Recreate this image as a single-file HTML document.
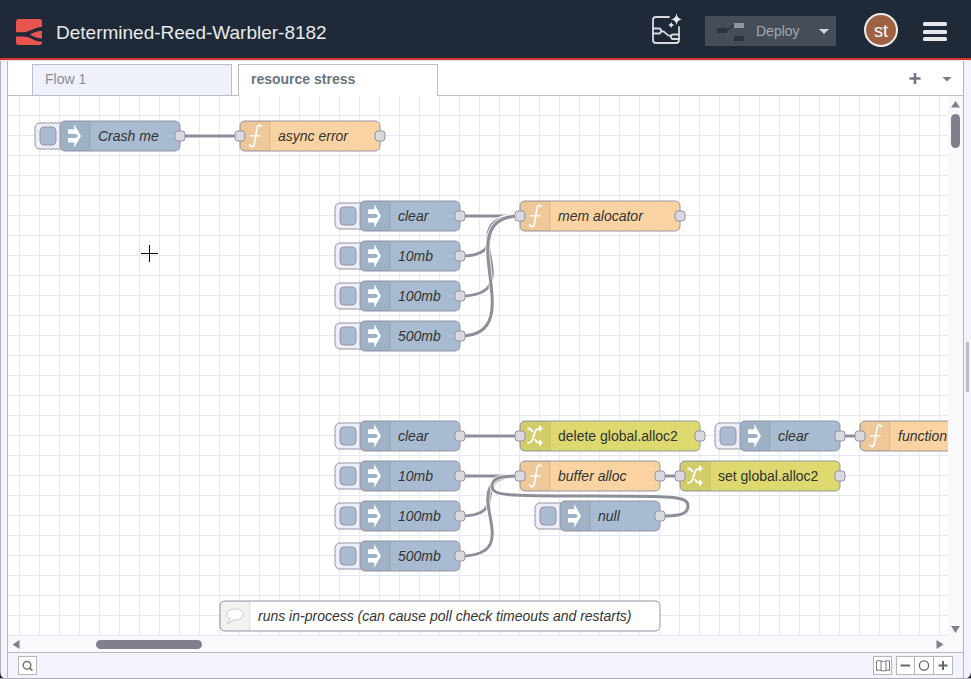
<!DOCTYPE html>
<html><head><meta charset="utf-8"><style>
html,body{margin:0;padding:0;width:971px;height:679px;overflow:hidden;background:#f3f3fb;font-family:"Liberation Sans",sans-serif;}
#hdr{position:absolute;left:0;top:0;width:971px;height:58px;background:#1f2937;}
#red{position:absolute;left:0;top:58px;width:971px;height:2px;background:#d83430;}
svg text{font-family:"Liberation Sans",sans-serif;font-size:14px;fill:#333;}
.lo{fill:none;stroke:#fff;stroke-opacity:0.8;stroke-width:5;}
.ln{fill:none;stroke:#8e8e9a;stroke-width:3;}
</style></head><body>
<div id="hdr"></div><div id="red"></div>
<svg width="971" height="679" style="position:absolute;left:0;top:0">
<!-- logo -->
<rect x="16" y="19" width="26" height="26" rx="2.5" fill="#e9544f"/>
<path d="M16 32.2 L23.3 32.2 C30 32.2 34 27.3 42 27.1 L42 30.9 C36 31 33 32.8 29.9 34.5 C33 36.2 36 38.3 42 38.5 L42 41.8 C34 41.6 30 36.5 23.3 36.5 L16 36.5 Z" fill="#1f2937"/>
<text x="56" y="39" style="font-size:19px;fill:#e8eaee">Determined-Reed-Warbler-8182</text>
<!-- ai icon -->
<g stroke="#d8dadf" stroke-width="1.8" fill="none" stroke-linecap="round">
<path d="M669 17 H656 Q653 17 653 20 V40 Q653 43 656 43 H676 Q679 43 679 40 V27"/>
<path d="M653 28.5 H659 Q661 28.5 661 31 Q661 33.5 659 33.5 H653"/>
<path d="M661 31 Q664 31 666 33.5 Q668 36 671 36"/>
<path d="M679 34.5 H673 Q671 34.5 671 36.5 Q671 39 673 39 H679"/>
</g>
<path d="M676.5 13.5 Q677.3 18.5 682 19.3 Q677.3 20.1 676.5 25 Q675.7 20.1 671 19.3 Q675.7 18.5 676.5 13.5Z" fill="#e5e7eb"/>
<path d="M671.2 22 Q671.7 24.5 674.2 25 Q671.7 25.5 671.2 28 Q670.7 25.5 668.2 25 Q670.7 24.5 671.2 22Z" fill="#e5e7eb"/>
<!-- deploy -->
<rect x="705" y="16" width="131" height="30" fill="#454d59"/>
<rect x="717" y="28" width="10" height="5" fill="#2e343d"/>
<path d="M727 30.5 L734 25" stroke="#2a303a" stroke-width="1.5"/>
<rect x="734" y="23" width="10" height="5" fill="#90959d"/>
<rect x="734" y="36" width="10" height="5" fill="#2e343d"/>
<text x="756" y="36" style="font-size:14px;fill:#a3a8b0">Deploy</text>
<path d="M819 29 L829 29 L824 34 Z" fill="#d1d5db"/>
<!-- avatar -->
<circle cx="881" cy="30" r="16" fill="#9e6242" stroke="#eeeeee" stroke-width="2"/>
<text x="881" y="36.5" text-anchor="middle" style="font-size:18px;fill:#fff">st</text>
<!-- hamburger -->
<rect x="923" y="22" width="24" height="4" rx="1.5" fill="#e5e7eb"/>
<rect x="923" y="30" width="24" height="4" rx="1.5" fill="#e5e7eb"/>
<rect x="923" y="37" width="24" height="4" rx="1.5" fill="#e5e7eb"/>

<!-- frame -->
<rect x="0" y="60" width="1" height="619" fill="#aeaeba"/>
<rect x="7" y="60" width="1" height="619" fill="#b5b6c4"/>
<rect x="963" y="60" width="1" height="619" fill="#b5b6c4"/>
<rect x="8" y="60" width="955" height="35" fill="#ffffff"/>
<rect x="0" y="60" width="971" height="1" fill="#e2e7eb"/>
<rect x="8" y="95" width="955" height="1" fill="#bbbccb"/>
<!-- tabs -->
<rect x="32.5" y="64.5" width="199" height="31" fill="#eef0fa" stroke="#bbbccb"/>
<text x="45" y="84" style="fill:#8a8d96">Flow 1</text>
<rect x="238.5" y="64.5" width="199" height="32" fill="#ffffff" stroke="#bbbccb"/>
<rect x="239" y="95" width="198" height="2" fill="#ffffff"/>
<text x="251" y="84" style="font-weight:bold;fill:#687580">resource stress</text>
<path d="M915 73 V84 M909.5 78.5 H920.5" stroke="#757888" stroke-width="2.6"/>
<path d="M942.5 77 L951.5 77 L947 81.5Z" fill="#757888"/>
<!-- workspace -->
<rect x="8" y="96" width="940" height="540" fill="#ffffff"/>
<defs><clipPath id="ws"><rect x="8" y="96" width="940" height="540"/></clipPath></defs>
<g clip-path="url(#ws)">
<rect x="19" y="96" width="1" height="540" fill="#e6e6f6"/><rect x="39" y="96" width="1" height="540" fill="#e6e6f6"/><rect x="59" y="96" width="1" height="540" fill="#e6e6f6"/><rect x="79" y="96" width="1" height="540" fill="#e6e6f6"/><rect x="99" y="96" width="1" height="540" fill="#e6e6f6"/><rect x="119" y="96" width="1" height="540" fill="#e6e6f6"/><rect x="139" y="96" width="1" height="540" fill="#e6e6f6"/><rect x="159" y="96" width="1" height="540" fill="#e6e6f6"/><rect x="179" y="96" width="1" height="540" fill="#e6e6f6"/><rect x="199" y="96" width="1" height="540" fill="#e6e6f6"/><rect x="219" y="96" width="1" height="540" fill="#e6e6f6"/><rect x="239" y="96" width="1" height="540" fill="#e6e6f6"/><rect x="259" y="96" width="1" height="540" fill="#e6e6f6"/><rect x="279" y="96" width="1" height="540" fill="#e6e6f6"/><rect x="299" y="96" width="1" height="540" fill="#e6e6f6"/><rect x="319" y="96" width="1" height="540" fill="#e6e6f6"/><rect x="339" y="96" width="1" height="540" fill="#e6e6f6"/><rect x="359" y="96" width="1" height="540" fill="#e6e6f6"/><rect x="379" y="96" width="1" height="540" fill="#e6e6f6"/><rect x="399" y="96" width="1" height="540" fill="#e6e6f6"/><rect x="419" y="96" width="1" height="540" fill="#e6e6f6"/><rect x="439" y="96" width="1" height="540" fill="#e6e6f6"/><rect x="459" y="96" width="1" height="540" fill="#e6e6f6"/><rect x="479" y="96" width="1" height="540" fill="#e6e6f6"/><rect x="499" y="96" width="1" height="540" fill="#e6e6f6"/><rect x="519" y="96" width="1" height="540" fill="#e6e6f6"/><rect x="539" y="96" width="1" height="540" fill="#e6e6f6"/><rect x="559" y="96" width="1" height="540" fill="#e6e6f6"/><rect x="579" y="96" width="1" height="540" fill="#e6e6f6"/><rect x="599" y="96" width="1" height="540" fill="#e6e6f6"/><rect x="619" y="96" width="1" height="540" fill="#e6e6f6"/><rect x="639" y="96" width="1" height="540" fill="#e6e6f6"/><rect x="659" y="96" width="1" height="540" fill="#e6e6f6"/><rect x="679" y="96" width="1" height="540" fill="#e6e6f6"/><rect x="699" y="96" width="1" height="540" fill="#e6e6f6"/><rect x="719" y="96" width="1" height="540" fill="#e6e6f6"/><rect x="739" y="96" width="1" height="540" fill="#e6e6f6"/><rect x="759" y="96" width="1" height="540" fill="#e6e6f6"/><rect x="779" y="96" width="1" height="540" fill="#e6e6f6"/><rect x="799" y="96" width="1" height="540" fill="#e6e6f6"/><rect x="819" y="96" width="1" height="540" fill="#e6e6f6"/><rect x="839" y="96" width="1" height="540" fill="#e6e6f6"/><rect x="859" y="96" width="1" height="540" fill="#e6e6f6"/><rect x="879" y="96" width="1" height="540" fill="#e6e6f6"/><rect x="899" y="96" width="1" height="540" fill="#e6e6f6"/><rect x="919" y="96" width="1" height="540" fill="#e6e6f6"/><rect x="939" y="96" width="1" height="540" fill="#e6e6f6"/><rect x="8" y="115" width="940" height="1" fill="#e6e6f6"/><rect x="8" y="135" width="940" height="1" fill="#e6e6f6"/><rect x="8" y="155" width="940" height="1" fill="#e6e6f6"/><rect x="8" y="175" width="940" height="1" fill="#e6e6f6"/><rect x="8" y="195" width="940" height="1" fill="#e6e6f6"/><rect x="8" y="215" width="940" height="1" fill="#e6e6f6"/><rect x="8" y="235" width="940" height="1" fill="#e6e6f6"/><rect x="8" y="255" width="940" height="1" fill="#e6e6f6"/><rect x="8" y="275" width="940" height="1" fill="#e6e6f6"/><rect x="8" y="295" width="940" height="1" fill="#e6e6f6"/><rect x="8" y="315" width="940" height="1" fill="#e6e6f6"/><rect x="8" y="335" width="940" height="1" fill="#e6e6f6"/><rect x="8" y="355" width="940" height="1" fill="#e6e6f6"/><rect x="8" y="375" width="940" height="1" fill="#e6e6f6"/><rect x="8" y="395" width="940" height="1" fill="#e6e6f6"/><rect x="8" y="415" width="940" height="1" fill="#e6e6f6"/><rect x="8" y="435" width="940" height="1" fill="#e6e6f6"/><rect x="8" y="455" width="940" height="1" fill="#e6e6f6"/><rect x="8" y="475" width="940" height="1" fill="#e6e6f6"/><rect x="8" y="495" width="940" height="1" fill="#e6e6f6"/><rect x="8" y="515" width="940" height="1" fill="#e6e6f6"/><rect x="8" y="535" width="940" height="1" fill="#e6e6f6"/><rect x="8" y="555" width="940" height="1" fill="#e6e6f6"/><rect x="8" y="575" width="940" height="1" fill="#e6e6f6"/><rect x="8" y="595" width="940" height="1" fill="#e6e6f6"/><rect x="8" y="615" width="940" height="1" fill="#e6e6f6"/><rect x="8" y="635" width="940" height="1" fill="#e6e6f6"/>
<path d="M 180 136 C 225.0 136 195.0 136 240 136" class="lo"/>
<path d="M 180 136 C 225.0 136 195.0 136 240 136" class="ln"/>
<path d="M 460 216 C 505.0 216 475.0 216 520 216" class="lo"/>
<path d="M 460 216 C 505.0 216 475.0 216 520 216" class="ln"/>
<path d="M 460 256 C 514.0832691319598 256 465.91673086804013 216 520 216" class="lo"/>
<path d="M 460 256 C 514.0832691319598 256 465.91673086804013 216 520 216" class="ln"/>
<path d="M 460 296 C 535.0 296 445.0 216 520 216" class="lo"/>
<path d="M 460 296 C 535.0 296 445.0 216 520 216" class="ln"/>
<path d="M 460 336 C 535.0 336 445.0 216 520 216" class="lo"/>
<path d="M 460 336 C 535.0 336 445.0 216 520 216" class="ln"/>
<path d="M 460 436 C 505.0 436 475.0 436 520 436" class="lo"/>
<path d="M 460 436 C 505.0 436 475.0 436 520 436" class="ln"/>
<path d="M 460 476 C 505.0 476 475.0 476 520 476" class="lo"/>
<path d="M 460 476 C 505.0 476 475.0 476 520 476" class="ln"/>
<path d="M 460 516 C 514.0832691319598 516 465.91673086804013 476 520 476" class="lo"/>
<path d="M 460 516 C 514.0832691319598 516 465.91673086804013 476 520 476" class="ln"/>
<path d="M 460 556 C 535.0 556 445.0 476 520 476" class="lo"/>
<path d="M 460 556 C 535.0 556 445.0 476 520 476" class="ln"/>
<path d="M 660 516 C 674.0 516 688.0 516 688.0 506.0 S 674.0 496 590 496 S 492.0 496 492.0 486.0 S 506.0 476 520 476" class="lo"/>
<path d="M 660 516 C 674.0 516 688.0 516 688.0 506.0 S 674.0 496 590 496 S 492.0 496 492.0 486.0 S 506.0 476 520 476" class="ln"/>
<path d="M 660 476 C 675.0 476 665.0 476 680 476" class="lo"/>
<path d="M 660 476 C 675.0 476 665.0 476 680 476" class="ln"/>
<path d="M 840 436 C 855.0 436 845.0 436 860 436" class="lo"/>
<path d="M 840 436 C 855.0 436 845.0 436 860 436" class="ln"/>
<g transform="translate(60,121)">
<rect x="-25" y="2" width="32" height="26" rx="5" ry="5" fill="#eeeef8" stroke="#9594a6"/>
<rect x="-20" y="6" width="16" height="18" rx="4" ry="4" fill="#a8bbd0" stroke="#9594a6"/>
<rect x="0" y="0" width="120" height="30" rx="5" ry="5" fill="#a8bbd0" stroke="#9594a6"/>
<path d="M5 0 H30 V30 H5 A5 5 0 0 1 0 25 V5 A5 5 0 0 1 5 0Z" fill="#000" fill-opacity="0.05"/>
<path d="M30 1 L30 29" stroke="#000" stroke-opacity="0.1"/>
<path d="M14.3 3.1 L20.9 15 L14.3 26.8 L14.3 21.6 L8.1 21.6 L8.1 16.9 L16 16.9 L18.2 15 L16 13 L8.1 13 L8.1 8.2 L14.3 8.2 Z" fill="#fff"/>
<text x="38" y="15" dy="0.35em" style="font-style:italic;">Crash me</text>
<rect x="115" y="10" width="10" height="10" rx="3" ry="3" fill="#d9dadf" stroke="#9594a6"/>
</g>
<g transform="translate(240,121)">
<rect x="0" y="0" width="140" height="30" rx="5" ry="5" fill="#fbd3a2" stroke="#9594a6"/>
<path d="M5 0 H30 V30 H5 A5 5 0 0 1 0 25 V5 A5 5 0 0 1 5 0Z" fill="#000" fill-opacity="0.05"/>
<path d="M30 1 L30 29" stroke="#000" stroke-opacity="0.1"/>
<path d="M21.7 6.3 C21 3.8 18.2 3.2 17.3 6.2 C16.4 9.5 15.2 19.5 14.2 23.3 C13.5 26.2 10.5 26.5 9.3 23.3" stroke="#fff" stroke-width="1.7" fill="none"/><path d="M10 14.8 H20.6" stroke="#fff" stroke-width="1.3"/>
<text x="38" y="15" dy="0.35em" style="font-style:italic;">async error</text>
<rect x="-5" y="10" width="10" height="10" rx="3" ry="3" fill="#d9dadf" stroke="#9594a6"/>
<rect x="135" y="10" width="10" height="10" rx="3" ry="3" fill="#d9dadf" stroke="#9594a6"/>
</g>
<g transform="translate(360,201)">
<rect x="-25" y="2" width="32" height="26" rx="5" ry="5" fill="#eeeef8" stroke="#9594a6"/>
<rect x="-20" y="6" width="16" height="18" rx="4" ry="4" fill="#a8bbd0" stroke="#9594a6"/>
<rect x="0" y="0" width="100" height="30" rx="5" ry="5" fill="#a8bbd0" stroke="#9594a6"/>
<path d="M5 0 H30 V30 H5 A5 5 0 0 1 0 25 V5 A5 5 0 0 1 5 0Z" fill="#000" fill-opacity="0.05"/>
<path d="M30 1 L30 29" stroke="#000" stroke-opacity="0.1"/>
<path d="M14.3 3.1 L20.9 15 L14.3 26.8 L14.3 21.6 L8.1 21.6 L8.1 16.9 L16 16.9 L18.2 15 L16 13 L8.1 13 L8.1 8.2 L14.3 8.2 Z" fill="#fff"/>
<text x="38" y="15" dy="0.35em" style="font-style:italic;">clear</text>
<rect x="95" y="10" width="10" height="10" rx="3" ry="3" fill="#d9dadf" stroke="#9594a6"/>
</g>
<g transform="translate(360,241)">
<rect x="-25" y="2" width="32" height="26" rx="5" ry="5" fill="#eeeef8" stroke="#9594a6"/>
<rect x="-20" y="6" width="16" height="18" rx="4" ry="4" fill="#a8bbd0" stroke="#9594a6"/>
<rect x="0" y="0" width="100" height="30" rx="5" ry="5" fill="#a8bbd0" stroke="#9594a6"/>
<path d="M5 0 H30 V30 H5 A5 5 0 0 1 0 25 V5 A5 5 0 0 1 5 0Z" fill="#000" fill-opacity="0.05"/>
<path d="M30 1 L30 29" stroke="#000" stroke-opacity="0.1"/>
<path d="M14.3 3.1 L20.9 15 L14.3 26.8 L14.3 21.6 L8.1 21.6 L8.1 16.9 L16 16.9 L18.2 15 L16 13 L8.1 13 L8.1 8.2 L14.3 8.2 Z" fill="#fff"/>
<text x="38" y="15" dy="0.35em" style="font-style:italic;">10mb</text>
<rect x="95" y="10" width="10" height="10" rx="3" ry="3" fill="#d9dadf" stroke="#9594a6"/>
</g>
<g transform="translate(360,281)">
<rect x="-25" y="2" width="32" height="26" rx="5" ry="5" fill="#eeeef8" stroke="#9594a6"/>
<rect x="-20" y="6" width="16" height="18" rx="4" ry="4" fill="#a8bbd0" stroke="#9594a6"/>
<rect x="0" y="0" width="100" height="30" rx="5" ry="5" fill="#a8bbd0" stroke="#9594a6"/>
<path d="M5 0 H30 V30 H5 A5 5 0 0 1 0 25 V5 A5 5 0 0 1 5 0Z" fill="#000" fill-opacity="0.05"/>
<path d="M30 1 L30 29" stroke="#000" stroke-opacity="0.1"/>
<path d="M14.3 3.1 L20.9 15 L14.3 26.8 L14.3 21.6 L8.1 21.6 L8.1 16.9 L16 16.9 L18.2 15 L16 13 L8.1 13 L8.1 8.2 L14.3 8.2 Z" fill="#fff"/>
<text x="38" y="15" dy="0.35em" style="font-style:italic;">100mb</text>
<rect x="95" y="10" width="10" height="10" rx="3" ry="3" fill="#d9dadf" stroke="#9594a6"/>
</g>
<g transform="translate(360,321)">
<rect x="-25" y="2" width="32" height="26" rx="5" ry="5" fill="#eeeef8" stroke="#9594a6"/>
<rect x="-20" y="6" width="16" height="18" rx="4" ry="4" fill="#a8bbd0" stroke="#9594a6"/>
<rect x="0" y="0" width="100" height="30" rx="5" ry="5" fill="#a8bbd0" stroke="#9594a6"/>
<path d="M5 0 H30 V30 H5 A5 5 0 0 1 0 25 V5 A5 5 0 0 1 5 0Z" fill="#000" fill-opacity="0.05"/>
<path d="M30 1 L30 29" stroke="#000" stroke-opacity="0.1"/>
<path d="M14.3 3.1 L20.9 15 L14.3 26.8 L14.3 21.6 L8.1 21.6 L8.1 16.9 L16 16.9 L18.2 15 L16 13 L8.1 13 L8.1 8.2 L14.3 8.2 Z" fill="#fff"/>
<text x="38" y="15" dy="0.35em" style="font-style:italic;">500mb</text>
<rect x="95" y="10" width="10" height="10" rx="3" ry="3" fill="#d9dadf" stroke="#9594a6"/>
</g>
<g transform="translate(520,201)">
<rect x="0" y="0" width="160" height="30" rx="5" ry="5" fill="#fbd3a2" stroke="#9594a6"/>
<path d="M5 0 H30 V30 H5 A5 5 0 0 1 0 25 V5 A5 5 0 0 1 5 0Z" fill="#000" fill-opacity="0.05"/>
<path d="M30 1 L30 29" stroke="#000" stroke-opacity="0.1"/>
<path d="M21.7 6.3 C21 3.8 18.2 3.2 17.3 6.2 C16.4 9.5 15.2 19.5 14.2 23.3 C13.5 26.2 10.5 26.5 9.3 23.3" stroke="#fff" stroke-width="1.7" fill="none"/><path d="M10 14.8 H20.6" stroke="#fff" stroke-width="1.3"/>
<text x="38" y="15" dy="0.35em" style="font-style:italic;">mem alocator</text>
<rect x="-5" y="10" width="10" height="10" rx="3" ry="3" fill="#d9dadf" stroke="#9594a6"/>
<rect x="155" y="10" width="10" height="10" rx="3" ry="3" fill="#d9dadf" stroke="#9594a6"/>
</g>
<g transform="translate(360,421)">
<rect x="-25" y="2" width="32" height="26" rx="5" ry="5" fill="#eeeef8" stroke="#9594a6"/>
<rect x="-20" y="6" width="16" height="18" rx="4" ry="4" fill="#a8bbd0" stroke="#9594a6"/>
<rect x="0" y="0" width="100" height="30" rx="5" ry="5" fill="#a8bbd0" stroke="#9594a6"/>
<path d="M5 0 H30 V30 H5 A5 5 0 0 1 0 25 V5 A5 5 0 0 1 5 0Z" fill="#000" fill-opacity="0.05"/>
<path d="M30 1 L30 29" stroke="#000" stroke-opacity="0.1"/>
<path d="M14.3 3.1 L20.9 15 L14.3 26.8 L14.3 21.6 L8.1 21.6 L8.1 16.9 L16 16.9 L18.2 15 L16 13 L8.1 13 L8.1 8.2 L14.3 8.2 Z" fill="#fff"/>
<text x="38" y="15" dy="0.35em" style="font-style:italic;">clear</text>
<rect x="95" y="10" width="10" height="10" rx="3" ry="3" fill="#d9dadf" stroke="#9594a6"/>
</g>
<g transform="translate(360,461)">
<rect x="-25" y="2" width="32" height="26" rx="5" ry="5" fill="#eeeef8" stroke="#9594a6"/>
<rect x="-20" y="6" width="16" height="18" rx="4" ry="4" fill="#a8bbd0" stroke="#9594a6"/>
<rect x="0" y="0" width="100" height="30" rx="5" ry="5" fill="#a8bbd0" stroke="#9594a6"/>
<path d="M5 0 H30 V30 H5 A5 5 0 0 1 0 25 V5 A5 5 0 0 1 5 0Z" fill="#000" fill-opacity="0.05"/>
<path d="M30 1 L30 29" stroke="#000" stroke-opacity="0.1"/>
<path d="M14.3 3.1 L20.9 15 L14.3 26.8 L14.3 21.6 L8.1 21.6 L8.1 16.9 L16 16.9 L18.2 15 L16 13 L8.1 13 L8.1 8.2 L14.3 8.2 Z" fill="#fff"/>
<text x="38" y="15" dy="0.35em" style="font-style:italic;">10mb</text>
<rect x="95" y="10" width="10" height="10" rx="3" ry="3" fill="#d9dadf" stroke="#9594a6"/>
</g>
<g transform="translate(360,501)">
<rect x="-25" y="2" width="32" height="26" rx="5" ry="5" fill="#eeeef8" stroke="#9594a6"/>
<rect x="-20" y="6" width="16" height="18" rx="4" ry="4" fill="#a8bbd0" stroke="#9594a6"/>
<rect x="0" y="0" width="100" height="30" rx="5" ry="5" fill="#a8bbd0" stroke="#9594a6"/>
<path d="M5 0 H30 V30 H5 A5 5 0 0 1 0 25 V5 A5 5 0 0 1 5 0Z" fill="#000" fill-opacity="0.05"/>
<path d="M30 1 L30 29" stroke="#000" stroke-opacity="0.1"/>
<path d="M14.3 3.1 L20.9 15 L14.3 26.8 L14.3 21.6 L8.1 21.6 L8.1 16.9 L16 16.9 L18.2 15 L16 13 L8.1 13 L8.1 8.2 L14.3 8.2 Z" fill="#fff"/>
<text x="38" y="15" dy="0.35em" style="font-style:italic;">100mb</text>
<rect x="95" y="10" width="10" height="10" rx="3" ry="3" fill="#d9dadf" stroke="#9594a6"/>
</g>
<g transform="translate(360,541)">
<rect x="-25" y="2" width="32" height="26" rx="5" ry="5" fill="#eeeef8" stroke="#9594a6"/>
<rect x="-20" y="6" width="16" height="18" rx="4" ry="4" fill="#a8bbd0" stroke="#9594a6"/>
<rect x="0" y="0" width="100" height="30" rx="5" ry="5" fill="#a8bbd0" stroke="#9594a6"/>
<path d="M5 0 H30 V30 H5 A5 5 0 0 1 0 25 V5 A5 5 0 0 1 5 0Z" fill="#000" fill-opacity="0.05"/>
<path d="M30 1 L30 29" stroke="#000" stroke-opacity="0.1"/>
<path d="M14.3 3.1 L20.9 15 L14.3 26.8 L14.3 21.6 L8.1 21.6 L8.1 16.9 L16 16.9 L18.2 15 L16 13 L8.1 13 L8.1 8.2 L14.3 8.2 Z" fill="#fff"/>
<text x="38" y="15" dy="0.35em" style="font-style:italic;">500mb</text>
<rect x="95" y="10" width="10" height="10" rx="3" ry="3" fill="#d9dadf" stroke="#9594a6"/>
</g>
<g transform="translate(520,421)">
<rect x="0" y="0" width="180" height="30" rx="5" ry="5" fill="#ddd96e" stroke="#9594a6"/>
<path d="M5 0 H30 V30 H5 A5 5 0 0 1 0 25 V5 A5 5 0 0 1 5 0Z" fill="#000" fill-opacity="0.05"/>
<path d="M30 1 L30 29" stroke="#000" stroke-opacity="0.1"/>
<g stroke="#fff" stroke-width="2" fill="none"><path d="M7.5 7.5 C10.5 7.5 11.5 8.5 12.5 11"/><path d="M14.8 18 C15.8 21 17 21.8 20 21.8"/><path d="M7.5 22 C10.5 22 11.5 21 12.5 18.5 L15 11 C16 8.5 17 7.5 20 7.5"/></g><path d="M19.2 3.8 L22.8 7.5 L19.2 11.2 Z" fill="#fff"/><path d="M19.2 18 L22.8 21.8 L19.2 25.6 Z" fill="#fff"/>
<text x="38" y="15" dy="0.35em" style="">delete global.alloc2</text>
<rect x="-5" y="10" width="10" height="10" rx="3" ry="3" fill="#d9dadf" stroke="#9594a6"/>
<rect x="175" y="10" width="10" height="10" rx="3" ry="3" fill="#d9dadf" stroke="#9594a6"/>
</g>
<g transform="translate(520,461)">
<rect x="0" y="0" width="140" height="30" rx="5" ry="5" fill="#fbd3a2" stroke="#9594a6"/>
<path d="M5 0 H30 V30 H5 A5 5 0 0 1 0 25 V5 A5 5 0 0 1 5 0Z" fill="#000" fill-opacity="0.05"/>
<path d="M30 1 L30 29" stroke="#000" stroke-opacity="0.1"/>
<path d="M21.7 6.3 C21 3.8 18.2 3.2 17.3 6.2 C16.4 9.5 15.2 19.5 14.2 23.3 C13.5 26.2 10.5 26.5 9.3 23.3" stroke="#fff" stroke-width="1.7" fill="none"/><path d="M10 14.8 H20.6" stroke="#fff" stroke-width="1.3"/>
<text x="38" y="15" dy="0.35em" style="font-style:italic;">buffer alloc</text>
<rect x="-5" y="10" width="10" height="10" rx="3" ry="3" fill="#d9dadf" stroke="#9594a6"/>
<rect x="135" y="10" width="10" height="10" rx="3" ry="3" fill="#d9dadf" stroke="#9594a6"/>
</g>
<g transform="translate(680,461)">
<rect x="0" y="0" width="160" height="30" rx="5" ry="5" fill="#ddd96e" stroke="#9594a6"/>
<path d="M5 0 H30 V30 H5 A5 5 0 0 1 0 25 V5 A5 5 0 0 1 5 0Z" fill="#000" fill-opacity="0.05"/>
<path d="M30 1 L30 29" stroke="#000" stroke-opacity="0.1"/>
<g stroke="#fff" stroke-width="2" fill="none"><path d="M7.5 7.5 C10.5 7.5 11.5 8.5 12.5 11"/><path d="M14.8 18 C15.8 21 17 21.8 20 21.8"/><path d="M7.5 22 C10.5 22 11.5 21 12.5 18.5 L15 11 C16 8.5 17 7.5 20 7.5"/></g><path d="M19.2 3.8 L22.8 7.5 L19.2 11.2 Z" fill="#fff"/><path d="M19.2 18 L22.8 21.8 L19.2 25.6 Z" fill="#fff"/>
<text x="38" y="15" dy="0.35em" style="">set global.alloc2</text>
<rect x="-5" y="10" width="10" height="10" rx="3" ry="3" fill="#d9dadf" stroke="#9594a6"/>
<rect x="155" y="10" width="10" height="10" rx="3" ry="3" fill="#d9dadf" stroke="#9594a6"/>
</g>
<g transform="translate(560,501)">
<rect x="-25" y="2" width="32" height="26" rx="5" ry="5" fill="#eeeef8" stroke="#9594a6"/>
<rect x="-20" y="6" width="16" height="18" rx="4" ry="4" fill="#a8bbd0" stroke="#9594a6"/>
<rect x="0" y="0" width="100" height="30" rx="5" ry="5" fill="#a8bbd0" stroke="#9594a6"/>
<path d="M5 0 H30 V30 H5 A5 5 0 0 1 0 25 V5 A5 5 0 0 1 5 0Z" fill="#000" fill-opacity="0.05"/>
<path d="M30 1 L30 29" stroke="#000" stroke-opacity="0.1"/>
<path d="M14.3 3.1 L20.9 15 L14.3 26.8 L14.3 21.6 L8.1 21.6 L8.1 16.9 L16 16.9 L18.2 15 L16 13 L8.1 13 L8.1 8.2 L14.3 8.2 Z" fill="#fff"/>
<text x="38" y="15" dy="0.35em" style="font-style:italic;">null</text>
<rect x="95" y="10" width="10" height="10" rx="3" ry="3" fill="#d9dadf" stroke="#9594a6"/>
</g>
<g transform="translate(740,421)">
<rect x="-25" y="2" width="32" height="26" rx="5" ry="5" fill="#eeeef8" stroke="#9594a6"/>
<rect x="-20" y="6" width="16" height="18" rx="4" ry="4" fill="#a8bbd0" stroke="#9594a6"/>
<rect x="0" y="0" width="100" height="30" rx="5" ry="5" fill="#a8bbd0" stroke="#9594a6"/>
<path d="M5 0 H30 V30 H5 A5 5 0 0 1 0 25 V5 A5 5 0 0 1 5 0Z" fill="#000" fill-opacity="0.05"/>
<path d="M30 1 L30 29" stroke="#000" stroke-opacity="0.1"/>
<path d="M14.3 3.1 L20.9 15 L14.3 26.8 L14.3 21.6 L8.1 21.6 L8.1 16.9 L16 16.9 L18.2 15 L16 13 L8.1 13 L8.1 8.2 L14.3 8.2 Z" fill="#fff"/>
<text x="38" y="15" dy="0.35em" style="font-style:italic;">clear</text>
<rect x="95" y="10" width="10" height="10" rx="3" ry="3" fill="#d9dadf" stroke="#9594a6"/>
</g>
<g transform="translate(860,421)">
<rect x="0" y="0" width="120" height="30" rx="5" ry="5" fill="#fbd3a2" stroke="#9594a6"/>
<path d="M5 0 H30 V30 H5 A5 5 0 0 1 0 25 V5 A5 5 0 0 1 5 0Z" fill="#000" fill-opacity="0.05"/>
<path d="M30 1 L30 29" stroke="#000" stroke-opacity="0.1"/>
<path d="M21.7 6.3 C21 3.8 18.2 3.2 17.3 6.2 C16.4 9.5 15.2 19.5 14.2 23.3 C13.5 26.2 10.5 26.5 9.3 23.3" stroke="#fff" stroke-width="1.7" fill="none"/><path d="M10 14.8 H20.6" stroke="#fff" stroke-width="1.3"/>
<text x="38" y="15" dy="0.35em" style="font-style:italic;">function</text>
<rect x="-5" y="10" width="10" height="10" rx="3" ry="3" fill="#d9dadf" stroke="#9594a6"/>
<rect x="115" y="10" width="10" height="10" rx="3" ry="3" fill="#d9dadf" stroke="#9594a6"/>
</g>
<g transform="translate(220,601)">
<rect x="0" y="0" width="440" height="30" rx="5" ry="5" fill="#ffffff" stroke="#9594a6"/>
<path d="M5 0 H30 V30 H5 A5 5 0 0 1 0 25 V5 A5 5 0 0 1 5 0Z" fill="#000" fill-opacity="0.05"/>
<path d="M30 1 L30 29" stroke="#000" stroke-opacity="0.1"/>
<ellipse cx="15" cy="13.5" rx="8.5" ry="5.6" fill="#fff" stroke="#ccc" stroke-width="1"/><path d="M10.5 18 L7 23 L14 19" fill="#fff" stroke="#ccc" stroke-width="1"/>
<text x="38" y="15" dy="0.35em" style="font-style:italic;">runs in-process (can cause poll check timeouts and restarts)</text>
</g>
</g>
<!-- cursor -->
<path d="M141 253.5 H158 M149.5 245 V262" stroke="#fff" stroke-width="3"/>
<path d="M141 253.5 H158 M149.5 245 V262" stroke="#000" stroke-width="1"/>
<!-- scrollbars -->
<rect x="948" y="96" width="15" height="540" fill="#f9f9fc"/>
<rect x="8" y="636" width="955" height="16" fill="#f9f9fc"/>
<path d="M951 107.5 L960 107.5 L955.5 101Z" fill="#80808c"/>
<rect x="951" y="114" width="9" height="34" rx="4.5" fill="#80808c"/>
<path d="M951 626 L960 626 L955.5 633Z" fill="#80808c"/>
<path d="M19.5 640 L19.5 649 L12.5 644.5Z" fill="#80808c"/>
<path d="M936.5 640 L936.5 649 L943.5 644.5Z" fill="#80808c"/>
<rect x="96" y="640" width="106" height="9" rx="4.5" fill="#80808c"/>
<!-- right divider -->
<rect x="966" y="342" width="3" height="50" fill="#bbbbc4"/>
<!-- footer -->
<path d="M0 672 L0 679 L7 679 A7 7 0 0 1 0 672Z" fill="#1a1f26"/>
<path d="M971 672 L971 679 L964 679 A7 7 0 0 0 971 672Z" fill="#1a1f26"/>
<rect x="8" y="652" width="955" height="1" fill="#b5b6c4"/>
<rect x="0" y="678" width="971" height="1" fill="#aeaeba"/>
<rect x="18.5" y="656.5" width="18" height="18" fill="#fff" stroke="#b5b6c4"/>
<circle cx="27" cy="665.3" r="3.8" fill="none" stroke="#707070" stroke-width="1.4"/>
<path d="M29.8 668.1 L32.5 670.8" stroke="#707070" stroke-width="1.6"/>
<rect x="873.5" y="656.5" width="18" height="18" fill="#fff" stroke="#b5b6c4"/>
<path d="M876.5 661 Q879 660 881 661 Q883.5 662 886 661 Q888 660 889.5 661 V670.5 Q888 669.5 886 670.5 Q883.5 671.5 881 670.5 Q879 669.5 876.5 670.5Z M881 661 V670.5 M886 661 V670.5" fill="none" stroke="#777" stroke-width="1"/>
<rect x="896.5" y="656.5" width="56" height="18" fill="#fff" stroke="#b5b6c4"/>
<rect x="914" y="657" width="1" height="17" fill="#b5b6c4"/>
<rect x="933" y="657" width="1" height="17" fill="#b5b6c4"/>
<path d="M900.5 665.5 H910" stroke="#666" stroke-width="2"/>
<circle cx="924" cy="665.5" r="4.6" fill="none" stroke="#666" stroke-width="1.3"/>
<path d="M943 661 V670 M938.5 665.5 H947.5" stroke="#666" stroke-width="2"/>
</svg>
</body></html>
